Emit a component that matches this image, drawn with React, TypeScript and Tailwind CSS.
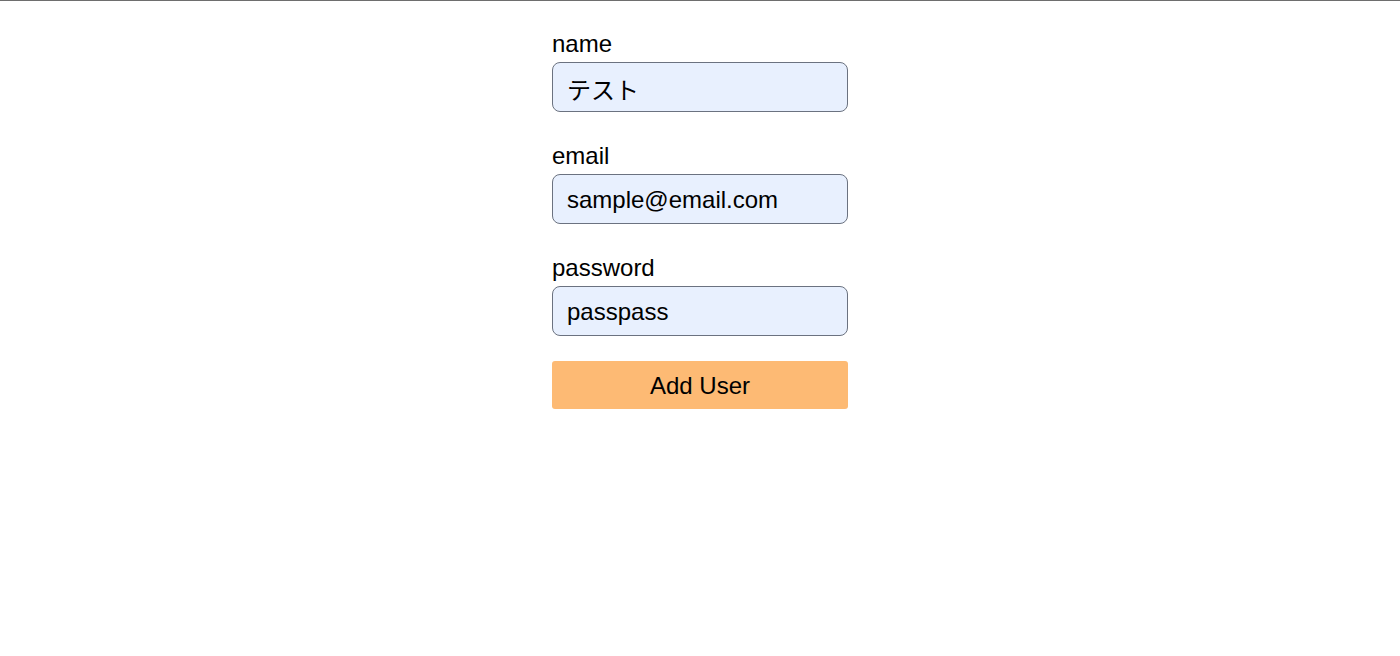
import React from "react";

const fontCls = "font-['Liberation_Sans','Noto_Sans_CJK_JP',Arial,sans-serif]";
const inputCls =
  "mt-[2px] h-[50px] w-full rounded-lg border border-[#6b7280] bg-[#e8f0fe] px-[14px] pt-[2px] text-[24px] outline-none font-['Liberation_Sans','Noto_Sans_CJK_JP',Arial,sans-serif]";

function Field({ label, value, first }: { label: string; value: string; first?: boolean }) {
  return (
    <div className={first ? "flex flex-col" : "mt-[28px] flex flex-col"}>
      <label className="text-[24px] leading-[32px]">{label}</label>
      <input className={inputCls} defaultValue={value} />
    </div>
  );
}

export default function App() {
  return (
    <div className={`min-h-[656px] bg-white border-t border-[#6e6e6e] ${fontCls}`}>
      <form className="mx-auto w-[296px] pt-[27px] flex flex-col text-black">
        <Field label="name" value="テスト" first />
        <Field label="email" value="sample@email.com" />
        <Field label="password" value="passpass" />
        <button
          type="button"
          className="mt-[25px] h-[48px] w-full rounded-[3px] bg-[#fdba74] pt-[2px] text-[24px] font-['Liberation_Sans','Noto_Sans_CJK_JP',Arial,sans-serif]"
        >
          Add User
        </button>
      </form>
    </div>
  );
}
